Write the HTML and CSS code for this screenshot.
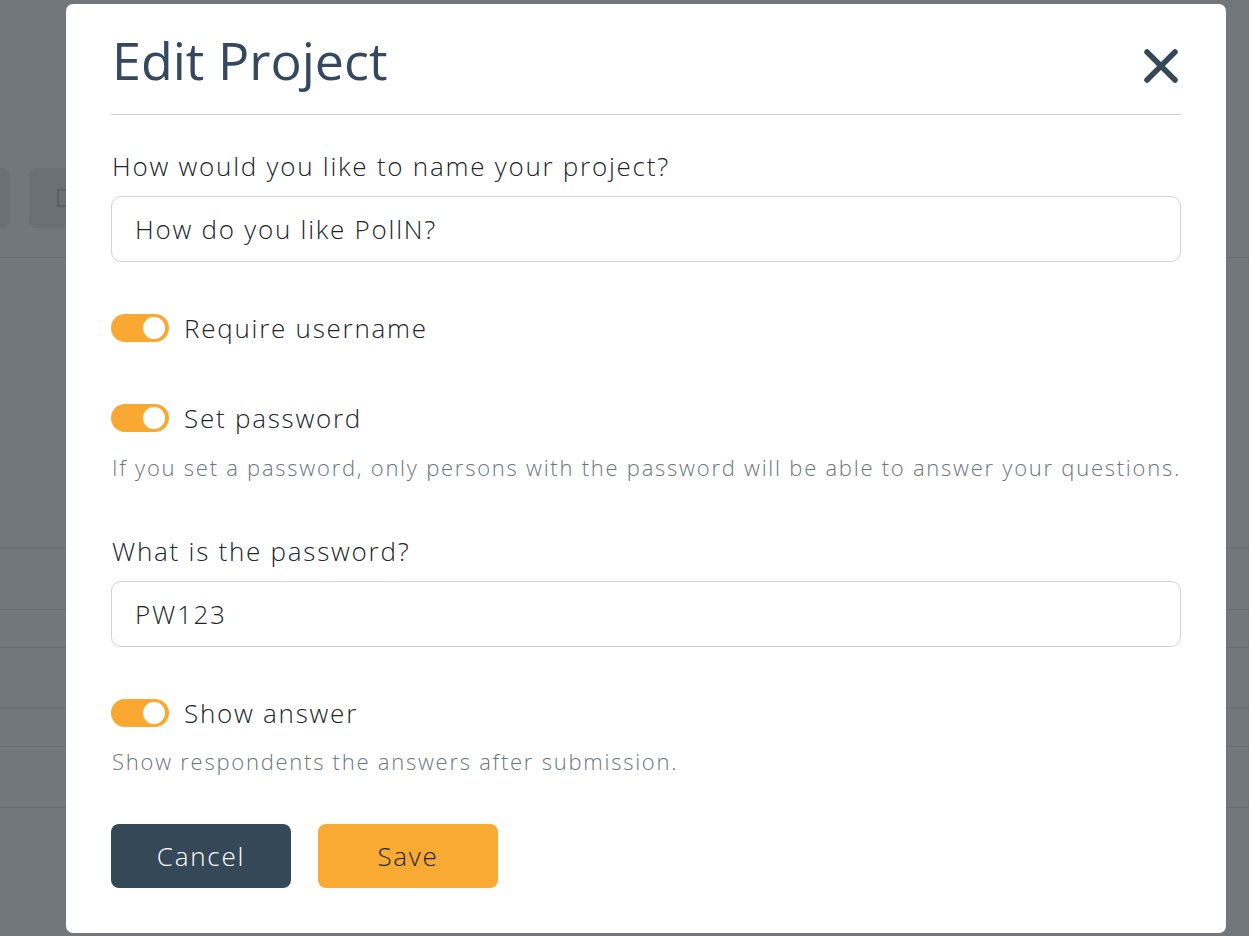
FILE: index.html
```html
<!DOCTYPE html>
<html lang="en">
<head>
<meta charset="utf-8">
<title>Edit Project</title>
<link rel="stylesheet" href="styles.css">
</head>
<body>
<div class="page">
  <div class="toolbar">
    <div class="tb-btn tb-btn-a"></div>
    <div class="tb-btn tb-btn-b"><span class="tb-icon"></span></div>
  </div>
  <div class="table">
    <div class="row row-1"></div>
    <div class="row row-2"></div>
    <div class="row row-3"></div>
    <div class="row row-4"></div>
    <div class="row row-5"></div>
    <div class="row row-6"></div>
  </div>
</div>

<div class="modal">
  <div class="modal-header">
    <h1 class="modal-title">Edit Project</h1>
    <button class="close" aria-label="Close">
      <svg width="40" height="40" viewBox="0 0 40 40"><path d="M6 6L34 34M34 6L6 34" stroke="#354857" stroke-width="5.5" stroke-linecap="round" fill="none"/></svg>
    </button>
  </div>
  <div class="modal-body">
    <label class="field-label first">How would you like to name your project?</label>
    <div class="input">How do you like PollN?</div>

    <div class="switch-row sw-1"><span class="switch"><span class="knob"></span></span><span class="switch-text">Require username</span></div>

    <div class="switch-row sw-2"><span class="switch"><span class="knob"></span></span><span class="switch-text">Set password</span></div>
    <p class="help help-1">If you set a password, only persons with the password will be able to answer your questions.</p>

    <label class="field-label second">What is the password?</label>
    <div class="input">PW123</div>

    <div class="switch-row sw-3"><span class="switch"><span class="knob"></span></span><span class="switch-text">Show answer</span></div>
    <p class="help help-2">Show respondents the answers after submission.</p>

    <div class="actions">
      <button class="btn btn-cancel">Cancel</button>
      <button class="btn btn-save">Save</button>
    </div>
  </div>
</div>
</body>
</html>
```

FILE: styles.css
```css
html, body {
  margin: 0;
  padding: 0;
  height: 100%;
}
body {
  background: #72777b;
  font-family: "Open Sans", "Liberation Sans", sans-serif;
  overflow: hidden;
}

/* background page (dimmed by backdrop) */
.page {
  height: 936px;
}
.toolbar {
  display: flex;
  gap: 19px;
  padding-top: 168px;
  margin-left: -50px;
  height: 60px;
  padding-bottom: 29px;
  border-bottom: 1px solid #686c70;
}
.tb-btn {
  width: 60px;
  height: 60px;
  border-radius: 8px;
  background: #6b7074;
}
.tb-btn-b {
  width: 80px;
  display: flex;
  align-items: center;
  padding-left: 28px;
  box-sizing: border-box;
}
.tb-icon {
  width: 12px;
  height: 14px;
  border: 2px solid #5b6064;
}
.table {
  padding-top: 290px;
}
.row {
  border-bottom: 1px solid #686c70;
}
.row-1 { height: 0; }
.row-2 { height: 60px; }
.row-3 { height: 37px; }
.row-4 { height: 60px; }
.row-5 { height: 37px; }
.row-6 { height: 60px; }

/* modal */
.modal {
  position: fixed;
  left: 66px;
  top: 4px;
  width: 1160px;
  height: 929px;
  background: #fff;
  border-radius: 7px;
  box-sizing: border-box;
  padding: 0 45px 0 45px;
  letter-spacing: 1.75px;
  font-weight: 350;
}
.modal-header {
  display: flex;
  justify-content: space-between;
  align-items: flex-start;
  padding-top: 25px;
  padding-bottom: 23px;
  border-bottom: 1px solid #cfcfcf;
}
.modal-title {
  margin: 0;
  font-size: 52px;
  line-height: 62px;
  font-weight: 400;
  letter-spacing: 0;
  color: #34495e;
  padding-left: 1px;
}
.close {
  border: 0;
  background: none;
  padding: 0;
  margin-top: 17px;
  margin-right: 0;
  width: 40px;
  height: 40px;
  cursor: pointer;
}
.close svg { display: block; }

.modal-body {
  display: flex;
  flex-direction: column;
  align-items: stretch;
}
.field-label {
  display: block;
  font-size: 26px;
  line-height: 32px;
  color: #212529;
  padding-left: 1px;
}
.field-label.first { margin-top: 35px; }
.field-label.second { margin-top: 54px; }

.input {
  margin-top: 14px;
  height: 66px;
  box-sizing: border-box;
  border: 1px solid #ced4da;
  border-radius: 10px;
  padding: 0 23px;
  display: flex;
  align-items: center;
  font-size: 26px;
  color: #212529;
}

.switch-row {
  display: flex;
  align-items: center;
  gap: 15px;
  height: 32px;
}
.sw-1 { margin-top: 50px; }
.sw-2 { margin-top: 58px; }
.sw-3 { margin-top: 50px; }
.switch {
  width: 58px;
  height: 28px;
  border-radius: 14px;
  background: #f9a932;
  display: flex;
  align-items: center;
  justify-content: flex-end;
  padding-right: 4px;
  box-sizing: border-box;
}
.knob {
  width: 22px;
  height: 22px;
  border-radius: 50%;
  background: #fff;
}
.switch-text {
  font-size: 26px;
  line-height: 32px;
  color: #212529;
}

.help {
  margin: 0;
  font-size: 22px;
  line-height: 28px;
  color: #6c757d;
  padding-left: 1px;
}
.help-1 { margin-top: 19px; }
.help-2 { margin-top: 18px; }

.actions {
  display: flex;
  gap: 27px;
  margin-top: 49px;
}
.btn {
  width: 180px;
  height: 64px;
  border: 0;
  border-radius: 8px;
  font-family: inherit;
  font-weight: inherit;
  letter-spacing: inherit;
  font-size: 26px;
  cursor: pointer;
}
.btn-cancel {
  background: #354857;
  color: #fff;
}
.btn-save {
  background: #f9aa33;
  color: #212529;
}
```
